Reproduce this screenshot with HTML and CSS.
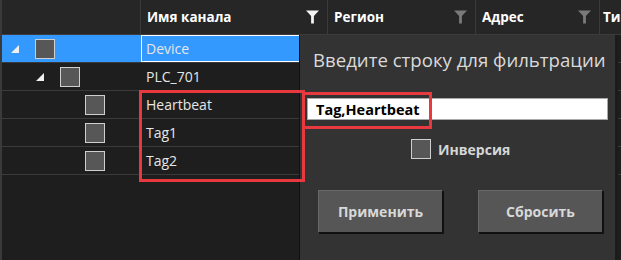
FILE: index.html
```html
<!DOCTYPE html>
<html>
<head>
    <title>Каналы</title>
    <link rel="stylesheet" href="styles.css">
</head>
<body>
    <div class="grid">
        <div class="grid-header">
            <div class="col-tree"></div>
            <div class="col-name head-cell">
                <span>Имя канала</span>
                <svg class="funnel active" viewBox="0 0 14 14"><path d="M0 0H14L8.5 6V14H5.5V6Z"/></svg>
            </div>
            <div class="col-region head-cell">
                <span>Регион</span>
                <svg class="funnel" viewBox="0 0 14 14"><path d="M0 0H14L8.5 6V14H5.5V6Z"/></svg>
            </div>
            <div class="col-addr head-cell">
                <span>Адрес</span>
                <svg class="funnel" viewBox="0 0 14 14"><path d="M0 0H14L8.5 6V14H5.5V6Z"/></svg>
            </div>
            <div class="col-type head-cell"><span>Ти</span></div>
        </div>

        <div class="row selected">
            <div class="col-tree lvl0"><span class="expander"></span><span class="check"></span></div>
            <div class="col-name cell focused">Device</div>
            <div class="col-region"></div>
            <div class="col-addr"></div>
            <div class="col-type"></div>
        </div>
        <div class="row">
            <div class="col-tree lvl1"><span class="expander"></span><span class="check"></span></div>
            <div class="col-name cell">PLC_701</div>
            <div class="col-region"></div>
            <div class="col-addr"></div>
            <div class="col-type"></div>
        </div>
        <div class="row">
            <div class="col-tree lvl2"><span class="check"></span></div>
            <div class="col-name cell">Heartbeat</div>
            <div class="col-region"></div>
            <div class="col-addr"></div>
            <div class="col-type"></div>
        </div>
        <div class="row">
            <div class="col-tree lvl2"><span class="check"></span></div>
            <div class="col-name cell">Tag1</div>
            <div class="col-region"></div>
            <div class="col-addr"></div>
            <div class="col-type"></div>
        </div>
        <div class="row">
            <div class="col-tree lvl2"><span class="check"></span></div>
            <div class="col-name cell">Tag2</div>
            <div class="col-region"></div>
            <div class="col-addr"></div>
            <div class="col-type"></div>
        </div>
    </div>

    <div class="filter-popup">
        <div class="filter-title">Введите строку для фильтрации</div>
        <input class="filter-input" type="text" value="Tag,Heartbeat">
        <label class="filter-invert"><span class="check"></span>Инверсия</label>
        <div class="filter-buttons">
            <button class="filter-button">Применить</button>
            <button class="filter-button">Сбросить</button>
        </div>
    </div>

    <!-- annotation frames -->
    <div class="mark mark-rows"></div>
    <div class="mark mark-input"></div>
</body>
</html>
```

FILE: styles.css
```css
body {
    margin: 0;
    width: 621px;
    height: 260px;
    overflow: hidden;
    background: #1e1e1e;
    font-family: "Open Sans", "Noto Sans", sans-serif;
    color: #e6e6e6;
    position: relative;
}
.grid {
    border-left: 2px solid #3a3a3a;
    height: 260px;
    box-sizing: border-box;
}
.grid-header {
    display: flex;
    height: 34px;
    background: #262626;
    border-bottom: 1px solid #3c3c3c;
}
.col-tree {
    width: 138px;
    flex: none;
    border-right: 1px solid #3a3a3a;
}
.col-name { width: 187px; flex: none; border-right: 1px solid #3a3a3a; }
.col-region { width: 148px; flex: none; border-right: 1px solid #3a3a3a; }
.col-addr { width: 124px; flex: none; border-right: 1px solid #3a3a3a; }
.col-type { flex: 1; min-width: 0; }
.head-cell {
    display: flex;
    align-items: center;
    padding: 0 8px 0 6px;
    box-sizing: border-box;
    font-weight: bold;
    font-size: 13.5px;
    color: #fff;
}
.head-cell span { flex: 1; white-space: nowrap; overflow: hidden; }
.col-type.head-cell { padding: 0 0 0 3px; }
.funnel {
    width: 13px;
    height: 14px;
    fill: #7a7a7a;
}
.funnel.active { fill: #f2f2f2; }

.row {
    display: flex;
    height: 27px;
    border-bottom: 1px solid #3a3a3a;
}
.row .col-tree,
.row .col-name,
.row .col-region,
.row .col-addr { border-right-color: transparent; }
.row .col-tree {
    display: flex;
    align-items: center;
    box-sizing: border-box;
}
.lvl0 { padding-left: 9px; }
.lvl1 { padding-left: 34px; }
.lvl2 { padding-left: 83px; }
.expander {
    width: 0;
    height: 0;
    border-left: 8px solid transparent;
    border-bottom: 8px solid #f0f0f0;
    margin-right: 16px;
    margin-top: 1px;
}
.check {
    width: 18px;
    height: 18px;
    border: 1px solid #cfcfcf;
    background: #575757;
    flex: none;
}
.cell {
    display: flex;
    align-items: center;
    padding-left: 6px;
    box-sizing: border-box;
    font-size: 14px;
}
.selected { background: #3399ff; }
.selected .col-type { background: #1e1e1e; }
.focused {
    border: 1px solid #ffffff;
    margin-left: 1px;
    padding-left: 4px;
    width: 186px;
}

.filter-popup {
    position: absolute;
    left: 299px;
    top: 35px;
    width: 319px;
    height: 225px;
    background: #333333;
    border-left: 1px solid #111;
    border-right: 3px solid #1b1b1b;
    box-sizing: border-box;
}
.filter-title {
    margin: 12px 0 0 13px;
    font-size: 18.6px;
    line-height: 26px;
    color: #dadada;
    white-space: nowrap;
}
.filter-input {
    display: block;
    margin: 25px 0 0 7px;
    width: 301px;
    height: 22px;
    box-sizing: border-box;
    border: 1px solid #a9a9a9;
    padding: 0 0 0 8px;
    font-family: inherit;
    font-weight: bold;
    font-size: 14.5px;
    line-height: 20px;
    color: #000;
    outline: none;
}
.filter-invert {
    display: flex;
    align-items: center;
    gap: 7px;
    margin: 19px 0 0 111px;
    height: 20px;
    font-weight: bold;
    font-size: 14px;
    color: #d6d6d6;
}
.filter-buttons {
    display: flex;
    gap: 35px;
    margin: 31px 0 0 18px;
}
.filter-button {
    width: 125px;
    height: 43px;
    background: #565656;
    border: 1px solid #686868;
    border-right-color: #111;
    border-bottom-color: #111;
    box-shadow: 1px 1px 0 #111;
    font-family: inherit;
    font-weight: bold;
    font-size: 14px;
    color: #d8d8d8;
}

.mark {
    position: absolute;
    border: 3px solid #e8393f;
    box-sizing: border-box;
}
.mark-rows { left: 139px; top: 90px; width: 166px; height: 92px; }
.mark-input { left: 302px; top: 92px; width: 130px; height: 37px; }
```
